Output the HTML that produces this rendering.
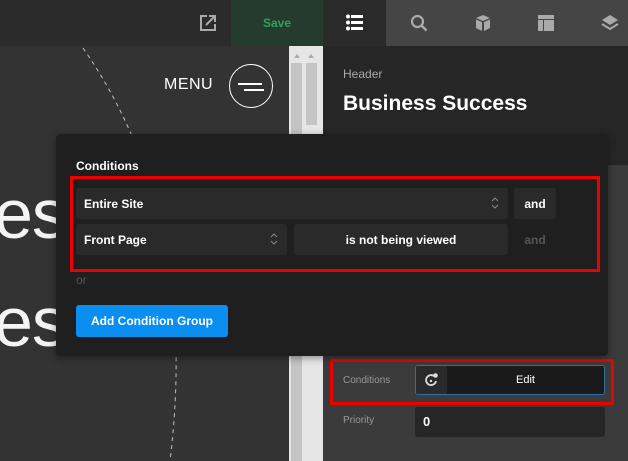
<!DOCTYPE html>
<html><head><meta charset="utf-8"><style>
*{margin:0;padding:0;box-sizing:border-box}
body{width:628px;height:461px;overflow:hidden;background:#333;font-family:"Liberation Sans",sans-serif;position:relative}
.a{position:absolute}
.t{font-weight:bold;color:#fff;font-size:12px}
</style></head><body>
<div class="a" style="left:0;top:0;width:231px;height:46px;background:#2b2b2b"></div>
<div class="a" style="left:231px;top:0;width:92px;height:46px;background:#243b2e"></div>
<div class="a t" style="left:231px;top:16px;width:92px;text-align:center;color:#2fa356">Save</div>
<div class="a" style="left:323px;top:0;width:63px;height:46px;background:#2a2a2a"></div>
<div class="a" style="left:386px;top:0;width:242px;height:46px;background:#454545"></div>
<svg class="a" style="left:199px;top:14px" width="18" height="18" viewBox="0 0 18 18"><path d="M8 2H2v14h14v-6" fill="none" stroke="#aaa" stroke-width="2"/><path d="M7 11l8-8M10 2h6v6" fill="none" stroke="#aaa" stroke-width="2"/></svg>
<svg class="a" style="left:346px;top:14px" width="17" height="17" viewBox="0 0 17 17" fill="#fff"><circle cx="2" cy="2.5" r="2"/><circle cx="2" cy="8.5" r="2"/><circle cx="2" cy="14.5" r="2"/><rect x="5" y="1" width="12" height="3"/><rect x="5" y="7" width="12" height="3"/><rect x="5" y="13" width="12" height="3"/></svg>
<svg class="a" style="left:410px;top:14px" width="18" height="18" viewBox="0 0 18 18"><circle cx="7.5" cy="7.5" r="5.5" fill="none" stroke="#aaa" stroke-width="2.2"/><path d="M11.5 11.5l5 5" stroke="#aaa" stroke-width="2.5"/></svg>
<svg class="a" style="left:474px;top:14px" width="18" height="18" viewBox="0 0 18 18" fill="#aaa"><path d="M9 1l7 3-7 3-7-3z"/><path d="M2 5.5l6 2.6V17l-6-3z"/><path d="M16 5.5l-6 2.6V17l6-3z"/></svg>
<svg class="a" style="left:538px;top:15px" width="16" height="16" viewBox="0 0 16 16" fill="#aaa"><rect x="0" y="0" width="16" height="4"/><rect x="0" y="5" width="5" height="11"/><rect x="6" y="5" width="10" height="11"/></svg>
<svg class="a" style="left:601px;top:14px" width="18" height="18" viewBox="0 0 18 18"><path d="M9 1l8 5-8 5-8-5z" fill="#aaa"/><path d="M1 10l8 5 8-5" fill="none" stroke="#aaa" stroke-width="2"/></svg>
<div class="a" style="left:0;top:46px;width:289px;height:415px;background:#333"></div>
<svg class="a" style="left:0;top:46px" width="289" height="415"><path d="M83 2 Q200 170 170 415" fill="none" stroke="#cbbcae" stroke-width="1" stroke-dasharray="4 4"/></svg>
<div class="a" style="left:164px;top:76px;color:#fff;font-size:16px;letter-spacing:0.5px">MENU</div>
<div class="a" style="left:229px;top:64px;width:44px;height:44px;border:1.5px solid #fff;border-radius:50%"></div>
<div class="a" style="left:238px;top:83px;width:24px;height:2px;background:#fff"></div>
<div class="a" style="left:244px;top:89px;width:20px;height:2px;background:#fff"></div>
<div class="a" style="left:-6px;top:174px;color:#f4f4f4;font-size:70px;letter-spacing:-1px">es</div>
<div class="a" style="left:-6px;top:282px;color:#f4f4f4;font-size:70px;letter-spacing:-1px">es</div>
<div class="a" style="left:289px;top:46px;width:34px;height:415px;background:#e6e6e6"></div>
<div class="a" style="left:291px;top:63px;width:11px;height:398px;background:#c4c4c4"></div>
<div class="a" style="left:306px;top:63px;width:11px;height:62px;background:#c4c4c4"></div>
<svg class="a" style="left:293px;top:53px" width="26" height="6"><path d="M1 5l3-4 3 4zM15 5l3-4 3 4z" fill="#aaa"/></svg>
<div class="a" style="left:323px;top:46px;width:305px;height:415px;background:#3b3b3b"></div>
<div class="a" style="left:323px;top:46px;width:305px;height:119px;background:#262626"></div>
<div class="a" style="left:343px;top:67px;color:#aaa;font-size:12px">Header</div>
<div class="a" style="left:343px;top:92px;color:#fff;font-size:21px;font-weight:bold">Business Success</div>
<div class="a" style="left:343px;top:375px;color:#999;font-size:10px">Conditions</div>
<div class="a" style="left:415px;top:365px;width:190px;height:30px;background:#1a1a1a;border:1px solid #2d6fa8;border-radius:3px;overflow:hidden"><div style="position:absolute;left:0;top:0;width:31px;height:30px;background:#2a2a2a"></div></div>
<svg class="a" style="left:423px;top:372px" width="16" height="16" viewBox="0 0 16 16"><path d="M11 4A5 5 0 1 0 13 9" fill="none" stroke="#ddd" stroke-width="1.8"/><circle cx="8" cy="9" r="1.2" fill="#ddd"/><circle cx="12.5" cy="3.5" r="2.3" fill="#ddd"/></svg>
<div class="a t" style="left:446px;top:374px;width:159px;text-align:center;font-size:11px;font-weight:normal">Edit</div>
<div class="a" style="left:330px;top:359px;width:284px;height:46px;border:3px solid #e00"></div>
<div class="a" style="left:343px;top:415px;color:#999;font-size:10px">Priority</div>
<div class="a" style="left:415px;top:407px;width:190px;height:30px;background:#262626;border-radius:3px"></div>
<div class="a t" style="left:423px;top:414px;font-size:13px">0</div>
<div class="a" style="left:56px;top:134px;width:552px;height:222px;background:#1f1f1f;border-radius:4px;box-shadow:0 2px 8px rgba(0,0,0,.4)"></div>
<div class="a t" style="left:76px;top:159px">Conditions</div>
<div class="a" style="left:76px;top:188px;width:432px;height:31px;background:#2a2a2a;border-radius:3px"></div>
<div class="a t" style="left:84px;top:197px">Entire Site</div>
<svg class="a" style="left:491px;top:196px" width="8" height="14"><path d="M1 5l3-3 3 3M1 9l3 3 3-3" fill="none" stroke="#888" stroke-width="1"/></svg>
<div class="a" style="left:514px;top:188px;width:42px;height:31px;background:#2a2a2a;border-radius:3px"></div>
<div class="a t" style="left:514px;top:197px;width:42px;text-align:center">and</div>
<div class="a" style="left:76px;top:224px;width:211px;height:31px;background:#2a2a2a;border-radius:3px"></div>
<div class="a t" style="left:84px;top:233px">Front Page</div>
<svg class="a" style="left:270px;top:232px" width="8" height="14"><path d="M1 5l3-3 3 3M1 9l3 3 3-3" fill="none" stroke="#888" stroke-width="1"/></svg>
<div class="a" style="left:294px;top:224px;width:214px;height:31px;background:#2a2a2a;border-radius:3px"></div>
<div class="a t" style="left:294px;top:233px;width:214px;text-align:center">is not being viewed</div>
<div class="a t" style="left:514px;top:233px;width:42px;text-align:center;color:#555">and</div>
<div class="a" style="left:70px;top:176px;width:530px;height:96px;border:3px solid #e00"></div>
<div class="a" style="left:76px;top:273px;color:#555;font-size:12px">or</div>
<div class="a" style="left:76px;top:305px;width:152px;height:32px;background:#0a8ef0;border-radius:3px"></div>
<div class="a t" style="left:76px;top:314px;width:152px;text-align:center">Add Condition Group</div>
</body></html>
